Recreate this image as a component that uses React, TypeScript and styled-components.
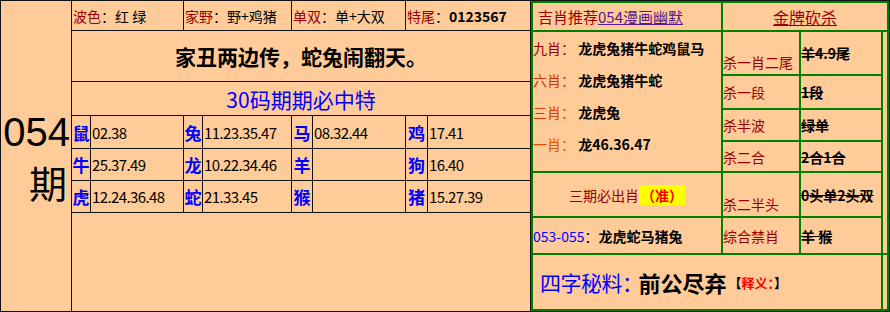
import React from 'react';
import styled, { createGlobalStyle } from 'styled-components';

const GlobalStyle = createGlobalStyle`
  html, body { margin: 0; padding: 0; background: #fff; }
  body { font-family: "Noto Sans CJK SC", "Liberation Sans", sans-serif; }
`;

const LINE = '#111';
const PEACH = '#FFCC99';
const MAROON = '#990000';
const GREEN = '#008000';
const BLUE = '#0000FF';

const Board = styled.div`
  display: flex;
  width: 890px;
  height: 312px;
  box-sizing: border-box;
  border: 1px solid ${LINE};
  background: ${PEACH};
  color: #000;
`;

const Issue = styled.div`
  width: 70px;
  border-right: 1px solid ${LINE};
  display: flex;
  flex-direction: column;
  justify-content: center;
  align-items: flex-end;
  padding-top: 2px;
`;

const IssueNum = styled.span`
  display: block;
  height: 50px;
  line-height: 50px;
  font-family: "Liberation Sans", sans-serif;
  font-size: 40px;
  padding-right: 1px;
`;

const IssueChar = styled.span`
  display: block;
  height: 50px;
  line-height: 50px;
  font-size: 38px;
  padding-right: 4px;
`;

const Main = styled.div`
  width: 458px;
  border-right: 1px solid ${LINE};
  display: flex;
  flex-direction: column;
`;

const TopRow = styled.div`
  display: grid;
  grid-template-columns: 111px 107px 113px 124px;
  gap: 1px;
  height: 29px;
  background: ${LINE};
  border-bottom: 1px solid ${LINE};
`;

const TopCell = styled.div`
  background: ${PEACH};
  display: flex;
  align-items: center;
  padding-left: 1px;
  font-size: 14px;
  white-space: nowrap;
`;

const Label = styled.span<{ $color?: string }>`
  color: ${({ $color }) => $color || MAROON};
`;

const Strong = styled.b`
  font-weight: 700;
`;

const Slogan = styled.div`
  height: 50px;
  border-bottom: 1px solid ${LINE};
  display: flex;
  align-items: center;
  justify-content: center;
  font-size: 21px;
  font-weight: 700;
`;

const Banner = styled.div`
  height: 33px;
  border-bottom: 1px solid ${LINE};
  display: flex;
  align-items: center;
  justify-content: center;
  font-size: 21px;
  color: ${BLUE};
`;

const ZodiacGrid = styled.div`
  display: grid;
  grid-template-columns: 18px 92px 18px 88px 20px 92px 21px 102px;
  grid-template-rows: 32px 31px 31px;
  gap: 1px;
  background: ${LINE};
  border-bottom: 1px solid ${LINE};
`;

const Animal = styled.div`
  background: ${PEACH};
  color: ${BLUE};
  font-size: 17px;
  font-weight: 700;
  display: flex;
  align-items: center;
  justify-content: center;
`;

const Numbers = styled.div`
  background: ${PEACH};
  font-size: 15px;
  letter-spacing: -0.6px;
  display: flex;
  align-items: center;
  padding-left: 1px;
`;

const Filler = styled.div`
  flex: 1;
`;

const Panel = styled.div`
  width: 358px;
  box-sizing: border-box;
  border: 2px solid ${GREEN};
  background: ${GREEN};
  display: grid;
  grid-template-columns: 188px 76px 80px 4px;
  grid-template-rows: 27px 42px 32px 30px 29px 43px 35px 54px;
  gap: 2px;
`;

const Cell = styled.div<{ $area: string; $center?: boolean; $low?: boolean }>`
  grid-area: ${({ $area }) => $area};
  background: ${PEACH};
  display: flex;
  align-items: center;
  justify-content: ${({ $center }) => ($center ? 'center' : 'flex-start')};
  padding-top: ${({ $low }) => ($low ? '18px' : '0')};
  font-size: 14px;
  white-space: nowrap;
`;

const HeadLink = styled.a<{ $color: string; $size: number }>`
  color: ${({ $color }) => $color};
  font-size: ${({ $size }) => $size}px;
  text-decoration: underline;
`;

const HeadText = styled.span`
  color: ${MAROON};
  font-size: 15px;
  padding-left: 5px;
`;

const List = styled.div`
  grid-area: 2 / 1 / 6 / 2;
  background: ${PEACH};
  font-size: 14px;
  line-height: 32px;
  display: flex;
  flex-direction: column;
`;

const ListRow = styled.div`
  white-space: nowrap;
`;

const Killed = styled.span`
  font-weight: 700;
  text-decoration: line-through;
`;

const Highlight = styled.span`
  background: #FFFF00;
  color: #FF0000;
  font-weight: 700;
  padding: 0 2px;
`;

const Secret = styled.span`
  color: ${BLUE};
  font-size: 21px;
  padding-left: 7px;
  letter-spacing: -0.5px;
`;

const SecretWord = styled.b`
  font-size: 22px;
  margin-left: -4px;
`;

const Note = styled.b`
  font-size: 13px;
  margin-left: 2px;
`;

const topItems = [
  { label: '波色', value: '红 绿' },
  { label: '家野', value: '野+鸡猪' },
  { label: '单双', value: '单+大双' },
  { label: '特尾', value: '0123567', bold: true },
];

const zodiacRows = [
  [['鼠', '02.38'], ['兔', '11.23.35.47'], ['马', '08.32.44'], ['鸡', '17.41']],
  [['牛', '25.37.49'], ['龙', '10.22.34.46'], ['羊', ''], ['狗', '16.40']],
  [['虎', '12.24.36.48'], ['蛇', '21.33.45'], ['猴', ''], ['猪', '15.27.39']],
];

const picks = [
  { label: '九肖', color: '#990000', value: '龙虎兔猪牛蛇鸡鼠马' },
  { label: '六肖', color: '#CC3300', value: '龙虎兔猪牛蛇' },
  { label: '三肖', color: '#D94000', value: '龙虎兔' },
  { label: '一肖', color: '#E05000', value: '龙46.36.47' },
];

const kills = [
  { label: '杀一肖二尾', value: '羊4.9尾', low: true },
  { label: '杀一段', value: '1段' },
  { label: '杀半波', value: '绿单' },
  { label: '杀二合', value: '2合1合' },
  { label: '杀二半头', value: '0头单2头双', low: true },
  { label: '综合禁肖', value: '羊 猴' },
];

export default function App() {
  return (
    <>
      <GlobalStyle />
      <Board>
        <Issue>
          <IssueNum>054</IssueNum>
          <IssueChar>期</IssueChar>
        </Issue>

        <Main>
          <TopRow>
            {topItems.map((it) => (
              <TopCell key={it.label}>
                <Label>{it.label}</Label>：
                {it.bold ? <Strong>{it.value}</Strong> : it.value}
              </TopCell>
            ))}
          </TopRow>
          <Slogan>家丑两边传，蛇兔闹翻天。</Slogan>
          <Banner>30码期期必中特</Banner>
          <ZodiacGrid>
            {zodiacRows.map((row) =>
              row.map(([a, n]) => (
                <React.Fragment key={a}>
                  <Animal>{a}</Animal>
                  <Numbers>{n}</Numbers>
                </React.Fragment>
              ))
            )}
          </ZodiacGrid>
          <Filler />
        </Main>

        <Panel>
          <Cell $area="1 / 1 / 2 / 2">
            <HeadText>
              吉肖推荐<HeadLink $color="#551A8B" $size={15}>054漫画幽默</HeadLink>
            </HeadText>
          </Cell>
          <Cell $area="1 / 2 / 2 / 5" $center>
            <HeadLink $color={MAROON} $size={16}>金牌砍杀</HeadLink>
          </Cell>

          <List>
            {picks.map((p) => (
              <ListRow key={p.label}>
                <Label $color={p.color}>{p.label}：</Label> <Strong>{p.value}</Strong>
              </ListRow>
            ))}
          </List>

          {kills.map((k, i) => (
            <React.Fragment key={k.label}>
              <Cell $area={`${i + 2} / 2 / ${i + 3} / 3`} $low={k.low}>
                <Label>{k.label}</Label>
              </Cell>
              <Cell $area={`${i + 2} / 3 / ${i + 3} / 4`}>
                <Killed>{k.value}</Killed>
              </Cell>
            </React.Fragment>
          ))}

          <Cell $area="6 / 1 / 7 / 2" $center>
            <Label>三期必出肖</Label>
            <Highlight>（准）</Highlight>
          </Cell>
          <Cell $area="7 / 1 / 8 / 2">
            <Label $color={BLUE}>053-055</Label>：<Strong>龙虎蛇马猪兔</Strong>
          </Cell>
          <Cell $area="2 / 4 / 8 / 5" />
          <Cell $area="8 / 1 / 9 / 4">
            <Secret>四字秘料：</Secret>
            <SecretWord>前公尽弃</SecretWord>
            <Note>
              【<Label $color="#FF0000">释义：</Label>】
            </Note>
          </Cell>
          <Cell $area="8 / 4 / 9 / 5" />
        </Panel>
      </Board>
    </>
  );
}
